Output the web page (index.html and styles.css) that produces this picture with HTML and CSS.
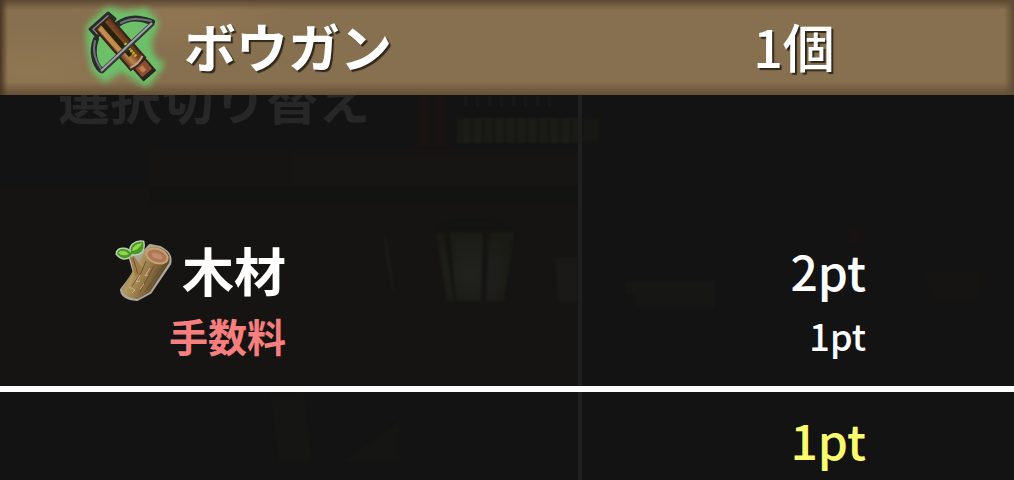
FILE: index.html
```html
<!DOCTYPE html>
<html lang="ja">
<head>
<meta charset="utf-8">
<meta name="viewport" content="width=device-width, initial-scale=1">
<title>ボウガン</title>
<link rel="stylesheet" href="styles.css">
</head>
<body>
<main class="panel">
  <div class="backdrop">
    <svg class="scene" viewBox="0 0 1014 480" preserveAspectRatio="none" aria-hidden="true">
      <defs>
        <pattern id="books" width="11" height="50" patternUnits="userSpaceOnUse">
          <rect width="9" height="50" fill="#1b1c16"/><rect x="9" width="2" height="50" fill="#161613"/>
        </pattern>
        <radialGradient id="lamp" gradientUnits="userSpaceOnUse" cx="472" cy="272" r="44"><stop offset="0" stop-color="#22221f"/><stop offset="1" stop-color="#1a1b15"/></radialGradient>
        <filter id="soft" color-interpolation-filters="sRGB"><feGaussianBlur stdDeviation="1"/></filter>
      </defs>
      <path fill="#151412" d="M150 150H580V200H150zM0 187H580V386H0z"/>
      <g filter="url(#soft)">
        <path fill="#171513" d="M290 152H580V186H290z"/>
        <path fill="#191312" d="M416 95h14v52h-14zM434 95h12v52h-12z"/>
        <path fill="url(#books)" d="M457 118H580V143H457z"/>
        <path fill="#171713" d="M582 118h17v23h-17z"/>
        <path fill="#191917" d="M464 95h3v12h-3zM476 95h3v12h-3zM488 95h3v12h-3zM500 95h3v12h-3zM512 95h3v12h-3zM524 95h3v12h-3zM536 95h3v12h-3zM548 95h3v12h-3z"/>
        <path fill="#131312" d="M150 187H580V204H150zM436 230L454 218H490L514 230z"/>
        <path fill="url(#lamp)" d="M436 233h8l10 68h-7zM450 233h33l-2 68h-25zM489 233h25l-10 68h-18z"/>
        <path fill="#1a1917" d="M555 257h23v45h-20zM383 236h3l9 54h-4z"/>
        <path fill="#161614" d="M625 281h90v27h-80v-14h-10z"/>
        <path fill="#151413" d="M922 270h60v30h-48z"/>
        <path fill="#171312" d="M848 228h14v16h-14z"/>
        <path fill="#151513" d="M270 392h34l8 70h-34zM342 462l58-42v42z"/>
      </g>
    </svg>
    <p class="ghost">選択切り替え</p>
  </div>
  <table class="ledger">
    <colgroup><col class="col-item"><col></colgroup>
    <thead>
      <tr>
        <th scope="col" class="title">
          <div class="item">
            <svg class="bow" viewBox="0 0 90 90" aria-hidden="true">
              <defs>
                <linearGradient id="wood" x1="0" y1="0" x2="1" y2="0"><stop offset="0" stop-color="#5d341b"/><stop offset=".35" stop-color="#bd864d"/><stop offset=".7" stop-color="#7b4724"/><stop offset="1" stop-color="#57301b"/></linearGradient>
                <filter id="glow" x="-20%" y="-20%" width="140%" height="140%" color-interpolation-filters="sRGB"><feGaussianBlur stdDeviation="3"/></filter>
              </defs>
              <path fill="#6dc069" stroke="#6dc069" stroke-width="8" stroke-linejoin="round" filter="url(#glow)" d="M9 27L27 10L44 14L64 11L74 22L66 42L70 58L79 64L65 82L40 66L24 77L14 68L10 47z"/>
              <g transform="translate(0 3)">
                <path fill="none" stroke="#292c2d" stroke-width="6" stroke-linecap="round" d="M37 20C49 12 59 14 71 18M15 35C10 48 14 61 20 66"/>
                <path fill="none" stroke="#707475" stroke-width="2" stroke-linecap="round" d="M40 19C51 13 60 15 70 17M14 37C11 48 16 59 20 65"/>
                <path fill="#818486" stroke="#292b2b" stroke-width="3" stroke-linejoin="round" d="M9 25L27 9L34 15L16 33z"/>
                <path fill="#37383a" d="M15 25L27 15L32 19L20 31z"/>
                <g transform="translate(23 23) rotate(-41)">
                  <path fill="url(#wood)" stroke="#38261a" stroke-width="2" d="M-8-4H11V50H-8z"/>
                  <path fill="#29230d" d="M-1-4H4V39H-1z"/>
                  <path fill="#c58c50" d="M-6-2H-2V28H-6z"/>
                  <path stroke="#bfb52b" stroke-width="3" stroke-dasharray="2 1" d="M5 26V44"/>
                  <path fill="#885030" stroke="#32231e" stroke-width="2" d="M-5 51H10V66H-5z"/>
                  <path fill="#c17b50" d="M-1 54H4V60H-1z"/>
                  <path fill="none" stroke="#c7a08a" stroke-width="2" d="M-7 48Q2 51 10 47"/>
                  <path fill="#2c2420" d="M-5 63H10V67H-5z"/>
                </g>
                <path stroke="#343737" stroke-width="5" d="M20 68L72 19"/>
                <path stroke="#a0a3a3" stroke-width="2" d="M20 67L71 19"/>
              </g>
            </svg>
            <span>ボウガン</span>
          </div>
        </th>
        <th scope="col" class="quantity">1個</th>
      </tr>
    </thead>
    <tbody>
      <tr class="material">
        <th scope="row">
          <div class="item item-end">
            <svg class="log" viewBox="0 0 60 66" aria-hidden="true">
              <defs><linearGradient id="bark" x1="0" y1="0" x2="1" y2=".5"><stop stop-color="#6c512c"/><stop offset=".4" stop-color="#b29861"/><stop offset=".65" stop-color="#927346"/><stop offset="1" stop-color="#4c371f"/></linearGradient></defs>
              <g transform="translate(0 2)">
                <path fill="#a9a89d" stroke="#a9a89d" stroke-width="4" stroke-linejoin="round" d="M17 20L21 34L8 51Q9 59 23 60L36 53L55 25Q58 15 46 9L36 7L28 16L23 15z"/>
                <path fill="#b8ceb0" stroke="#b8ceb0" stroke-width="3" d="M17 14C15 6 22 2 29 3C31 12 26 16 18 15C15 20 8 21 3 15C3 9 13 8 17 14z"/>
                <path fill="url(#bark)" d="M29 15L8 50Q8 58 24 60L36 53L55 24Q58 13 46 9Q34 5 29 15z"/>
                <path fill="#a27e4b" d="M16 18L20 17L30 32L26 39L21 37z"/>
                <path fill="none" stroke="#6d512b" stroke-width="1" d="M32 22L27 34L18 47M40 27L34 38L26 53M48 28L41 38L31 53M19 19L24 35"/>
                <path fill="none" stroke="#cdb67f" stroke-width="1" d="M36 29L31 37L34 36M26 36L22 43L26 42M15 48L21 51L18 54M30 45L26 50"/>
                <ellipse cx="43" cy="17" rx="11" ry="7" transform="rotate(20 43 17)" fill="#ad7855" stroke="#c9a473" stroke-width="2"/>
                <ellipse cx="43" cy="17" rx="6" ry="3" transform="rotate(20 43 17)" fill="#c18d6c" stroke="#b07d5d"/>
                <path fill="#4b9924" d="M17 14C15 6 22 2 29 3C31 12 26 16 18 15C15 20 8 21 3 15C3 9 13 8 17 14z"/>
                <path fill="#94d551" d="M18 12Q19 5 28 4Q25 11 18 12M4 14Q9 9 15 15Q9 18 4 14"/>
              </g>
            </svg>
            <span>木材</span>
          </div>
        </th>
        <td>2pt</td>
      </tr>
      <tr class="fee">
        <th scope="row"><div class="item item-end">手数料</div></th>
        <td>1pt</td>
      </tr>
    </tbody>
    <tfoot>
      <tr class="balance"><td></td><td>1pt</td></tr>
    </tfoot>
  </table>
</main>
</body>
</html>
```
FILE: styles.css
```css
* { box-sizing: border-box; }

body {
  margin: 0;
  background: #141313;
  color: #fff;
  font-family: "Noto Sans CJK JP", sans-serif;
}

.panel {
  position: relative;
  overflow: hidden;
}

.backdrop, .scene {
  position: absolute;
  inset: 0;
  width: 100%;
  height: 100%;
}

.ghost {
  position: absolute;
  top: 72px;
  left: 58px;
  margin: 0;
  color: #272727;
  font-size: 52px;
  font-weight: 700;
  line-height: 52px;
}

.ledger {
  position: relative;
  width: 100%;
  table-layout: fixed;
  border-collapse: separate;
  border-spacing: 0;
}

.col-item { width: 57%; }

th, td { padding: 0; font-weight: 500; }

thead tr {
  background:
    linear-gradient(90deg, #4a3722 0, transparent 8px, transparent calc(100% - 10px), #604c34 100%),
    linear-gradient(#5d4a33 0, transparent 10px, transparent 86%, #644f36 100%),
    radial-gradient(ellipse 110px 40px at 18% 15%, #a1805a66, transparent),
    radial-gradient(ellipse 140px 45px at 3% 75%, #a3845c55, transparent),
    #87704f;
}

thead th {
  height: 95px;
  padding-bottom: 4px;
  font-size: 52px;
  font-weight: 700;
  line-height: 52px;
  text-shadow: 2px 2px 1px #30271c;
}

thead .quantity {
  padding-right: 4px;
  font-weight: 500;
  text-align: center;
}

.item {
  display: flex;
  align-items: center;
}

.title .item { gap: 10px; padding-left: 78px; }

.item-end { justify-content: flex-end; gap: 8px; padding-right: 292px; }

.bow { width: 96px; height: 90px; }

.log { width: 60px; height: 66px; }

td { text-align: right; padding-right: 148px; }

tbody td, tfoot td:last-child { box-shadow: inset 4px 0 #1f1f1f; }

.material th, .material td {
  height: 215px;
  padding-top: 142px;
  vertical-align: top;
  font-size: 52px;
  line-height: 66px;
}

.material th, .fee th { font-weight: 700; }

.material td, .balance td { font-size: 48px; }

.fee th, .fee td {
  height: 76px;
  padding-bottom: 26px;
  font-size: 39px;
  line-height: 50px;
}

.fee th { color: #f57f7e; }

.fee td { font-size: 36px; }

.balance td {
  height: 94px;
  padding-top: 6px;
  border-top: 6px solid #fff;
  color: #fbfb70;
  line-height: 66px;
}
```
